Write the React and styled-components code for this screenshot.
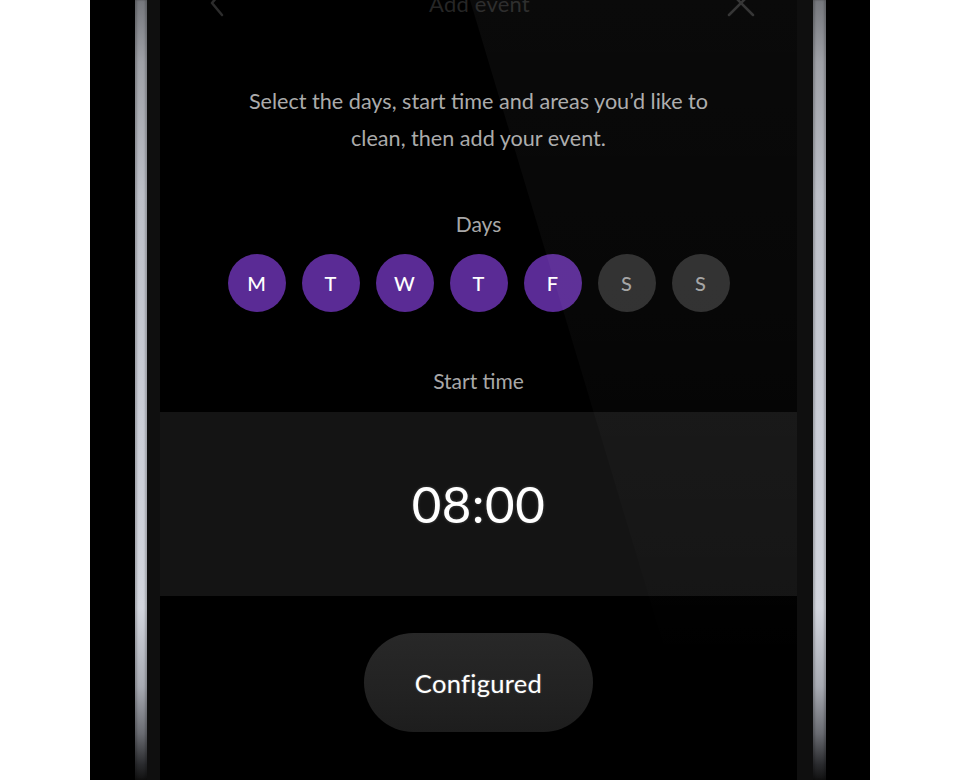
import React from "react";
import styled, { createGlobalStyle } from "styled-components";

const days = [
  { key: "mon", label: "M", on: true },
  { key: "tue", label: "T", on: true },
  { key: "wed", label: "W", on: true },
  { key: "thu", label: "T", on: true },
  { key: "fri", label: "F", on: true },
  { key: "sat", label: "S", on: false },
  { key: "sun", label: "S", on: false },
];

const GlobalStyle = createGlobalStyle`
  html, body {
    margin: 0;
    padding: 0;
    background: #ffffff;
  }
  body {
    font-family: Lato, "Open Sans", "Noto Sans", sans-serif;
  }
`;

const Page = styled.div`
  width: 960px;
  height: 780px;
  overflow: hidden;
  display: flex;
  justify-content: center;
  background: #ffffff;
`;

const Phone = styled.div`
  width: 780px;
  height: 780px;
  background: #000;
  display: flex;
  padding: 0 44px 0 45px;
  box-sizing: border-box;
`;

const Rail = styled.div`
  width: ${(p) => p.$w}px;
  flex-shrink: 0;
  background: linear-gradient(
    180deg,
    #75777c 0%,
    #9fa1a7 8%,
    #bcbfc7 25%,
    #cbced7 55%,
    #d2d5dd 78%,
    #a8abb3 88%,
    #6a6c72 94%,
    #2a2b2e 98%,
    #111 100%
  );
  box-shadow: inset 2px 0 2px rgba(0, 0, 0, 0.2), inset -2px 0 2px rgba(0, 0, 0, 0.2);
`;

const Bezel = styled.div`
  width: ${(p) => p.$w}px;
  flex-shrink: 0;
  background: #0f0f0f;
`;

const Screen = styled.div`
  position: relative;
  width: 637px;
  flex-shrink: 0;
  background: #000;
  display: flex;
  flex-direction: column;
  align-items: center;
  overflow: hidden;
`;

const Glare = styled.div`
  position: absolute;
  inset: 0;
  pointer-events: none;
  clip-path: polygon(310px 0, 100% 0, 100% 100%, 544px 100%);
  background: linear-gradient(
    180deg,
    rgba(255, 255, 255, 0.04) 0%,
    rgba(255, 255, 255, 0.028) 40%,
    rgba(255, 255, 255, 0.01) 70%,
    rgba(255, 255, 255, 0) 85%
  );
`;

const Header = styled.div`
  width: 100%;
  height: 40px;
  margin-top: -17px;
  display: flex;
  align-items: center;
  justify-content: space-between;
  padding: 0 42px 0 44px;
  box-sizing: border-box;
`;

const HeaderTitle = styled.div`
  font-size: 22px;
  letter-spacing: 0.2px;
  color: #262626;
`;

const IconButton = styled.div`
  width: 28px;
  height: 28px;
  display: flex;
  align-items: center;
  justify-content: center;
`;

const Intro = styled.p`
  margin: 60px 0 0;
  font-size: 21.6px;
  line-height: 37px;
  color: #ababab;
  text-align: center;
`;

const Label = styled.div`
  margin-top: ${(p) => p.$top}px;
  font-size: 21px;
  line-height: 24px;
  color: #a8a8a8;
`;

const DayRow = styled.div`
  margin-top: 18px;
  display: flex;
  gap: 16px;
`;

const DayDot = styled.div`
  width: 58px;
  height: 58px;
  border-radius: 50%;
  display: flex;
  align-items: center;
  justify-content: center;
  font-size: 20px;
  font-weight: 500;
  background: ${(p) => (p.$on ? "#5a2b95" : "#2d2d2d")};
  color: ${(p) => (p.$on ? "#ffffff" : "#a3a3a3")};
`;

const TimePanel = styled.div`
  margin-top: 19px;
  width: 100%;
  height: 184px;
  background: #141414;
  display: flex;
  align-items: center;
  justify-content: center;
`;

const TimeText = styled.div`
  font-size: 51px;
  color: #ffffff;
  letter-spacing: 0.5px;
  margin-top: -2px;
  text-shadow: 0 0 3px rgba(255, 255, 255, 0.25);
`;

const ConfiguredButton = styled.button`
  margin-top: 37px;
  width: 229px;
  height: 99px;
  border: none;
  border-radius: 50px;
  background: linear-gradient(180deg, #282828 0%, #222 60%, #1d1d1d 100%);
  color: #ffffff;
  font-family: inherit;
  font-size: 25.5px;
  font-weight: 400;
  letter-spacing: 0.3px;
  text-shadow: 0 0 2px rgba(255, 255, 255, 0.3);
`;

function BackIcon() {
  return (
    <svg width="20" height="28" viewBox="0 0 20 28" fill="none">
      <path d="M14 2 L4 14 L14 26" stroke="#2c2c2c" strokeWidth="2.5" strokeLinecap="round" strokeLinejoin="round" />
    </svg>
  );
}

function CloseIcon() {
  return (
    <svg width="28" height="28" viewBox="0 0 28 28" fill="none">
      <path d="M2 2 L26 26 M26 2 L2 26" stroke="#2e2e2e" strokeWidth="2.5" strokeLinecap="round" />
    </svg>
  );
}

export default function App() {
  return (
    <>
      <GlobalStyle />
      <Page>
        <Phone>
          <Rail $w={12} />
          <Bezel $w={13} />
          <Screen>
            <Header>
              <IconButton>
                <BackIcon />
              </IconButton>
              <HeaderTitle>Add event</HeaderTitle>
              <IconButton>
                <CloseIcon />
              </IconButton>
            </Header>

            <Intro>
              Select the days, start time and areas you’d like to
              <br />
              clean, then add your event.
            </Intro>

            <Label $top={55}>Days</Label>
            <DayRow>
              {days.map((d) => (
                <DayDot key={d.key} $on={d.on}>
                  {d.label}
                </DayDot>
              ))}
            </DayRow>

            <Label $top={57}>Start time</Label>
            <TimePanel>
              <TimeText>08:00</TimeText>
            </TimePanel>

            <ConfiguredButton>Configured</ConfiguredButton>
            <Glare />
          </Screen>
          <Bezel $w={16} />
          <Rail $w={13} />
        </Phone>
      </Page>
    </>
  );
}
